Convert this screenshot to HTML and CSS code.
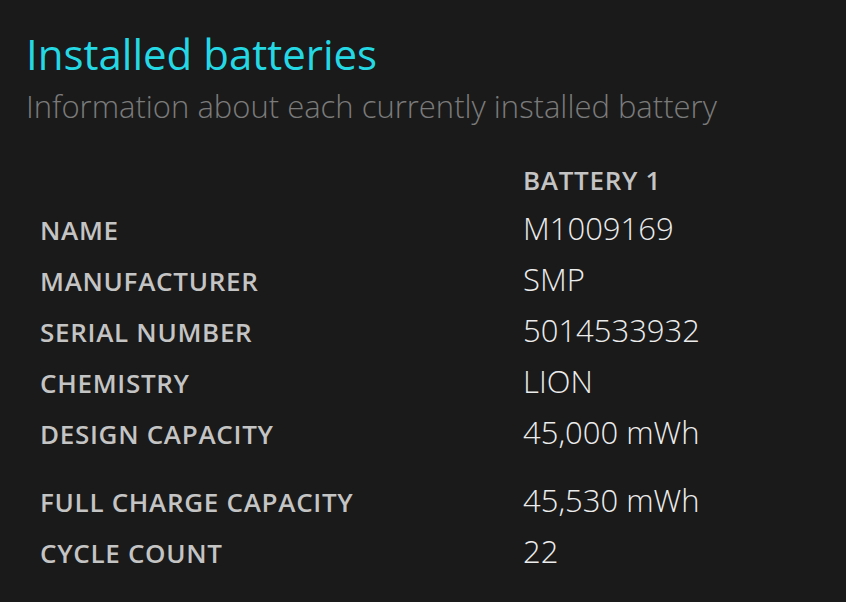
FILE: index.html
```html
<!DOCTYPE html>
<html lang="en">
<head>
<meta charset="utf-8">
<title>Installed batteries</title>
<link rel="stylesheet" href="styles.css">
</head>
<body>
<main class="page">
  <header class="head">
    <h1 class="title">Installed batteries</h1>
    <p class="subtitle">Information about each currently installed battery</p>
  </header>
  <section class="table">
    <div class="row head-row"><div class="label"></div><div class="colhead">BATTERY 1</div></div>
    <div class="row"><div class="label">NAME</div><div class="value">M1009169</div></div>
    <div class="row"><div class="label">MANUFACTURER</div><div class="value">SMP</div></div>
    <div class="row"><div class="label">SERIAL NUMBER</div><div class="value">5014533932</div></div>
    <div class="row"><div class="label">CHEMISTRY</div><div class="value">LION</div></div>
    <div class="row"><div class="label">DESIGN CAPACITY</div><div class="value">45,000 mWh</div></div>
    <div class="spacer"></div>
    <div class="row"><div class="label">FULL CHARGE CAPACITY</div><div class="value">45,530 mWh</div></div>
    <div class="row"><div class="label">CYCLE COUNT</div><div class="value">22</div></div>
  </section>
</main>
</body>
</html>
```
FILE: styles.css
```css
html, body {
  margin: 0;
  padding: 0;
  background: #1a1a1a;
}
body {
  width: 846px;
  height: 602px;
  overflow: hidden;
  font-family: "Open Sans", "Noto Sans", sans-serif;
}
.page {
  padding: 29px 0 0 26px;
}
.head {
  display: flex;
  flex-direction: column;
}
.title {
  margin: 0;
  font-size: 42px;
  line-height: 50px;
  font-weight: 400;
  color: #24d8e4;
}
.subtitle {
  margin: 0;
  font-size: 31px;
  line-height: 54px;
  font-weight: 300;
  color: #7b7b7b;
}
.table {
  display: flex;
  flex-direction: column;
  margin-top: 26px;
  padding-left: 14px;
}
.row {
  display: grid;
  grid-template-columns: 483px auto;
  height: 51px;
  align-items: baseline;
}
.spacer {
  height: 17px;
}
.label,
.colhead {
  font-size: 26px;
  font-weight: 600;
  letter-spacing: 0.7px;
  color: #c4c4c4;
  line-height: 30px;
}
.colhead {
  line-height: 42px;
}
.value {
  font-size: 31px;
  font-weight: 300;
  color: #ececec;
  line-height: 36px;
}
```
